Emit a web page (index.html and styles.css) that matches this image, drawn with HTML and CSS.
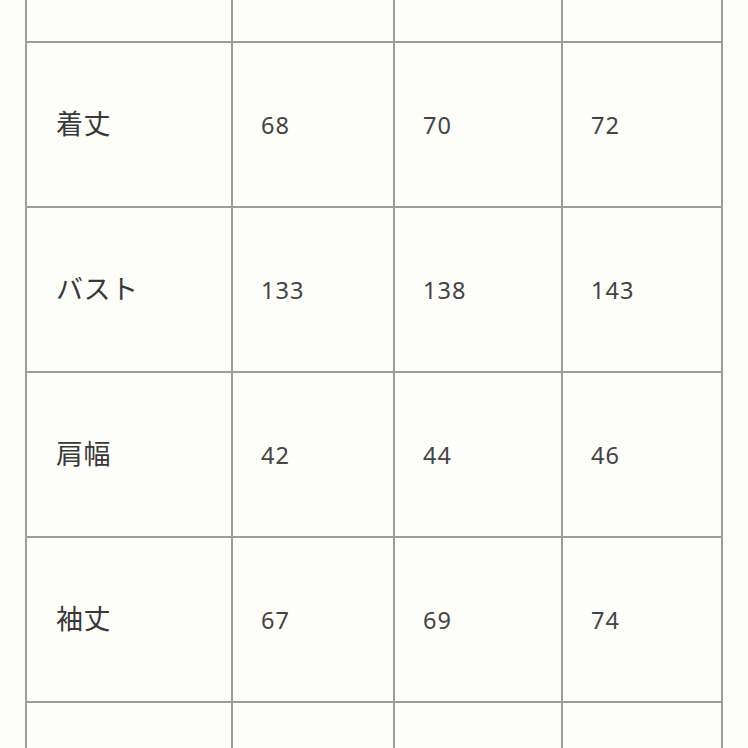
FILE: index.html
```html
<!DOCTYPE html>
<html lang="ja">
<head>
<meta charset="utf-8">
<link rel="stylesheet" href="styles.css">
</head>
<body>
<div class="frame">
<div class="sheet">
  <div class="cell"></div><div class="cell"></div><div class="cell"></div><div class="cell"></div>
  <div class="cell label">着丈</div><div class="cell num">68</div><div class="cell num">70</div><div class="cell num">72</div>
  <div class="cell label">バスト</div><div class="cell num">133</div><div class="cell num">138</div><div class="cell num">143</div>
  <div class="cell label">肩幅</div><div class="cell num">42</div><div class="cell num">44</div><div class="cell num">46</div>
  <div class="cell label">袖丈</div><div class="cell num">67</div><div class="cell num">69</div><div class="cell num">74</div>
  <div class="cell"></div><div class="cell"></div><div class="cell"></div><div class="cell"></div>
</div>
</div>
</body>
</html>
```
FILE: styles.css
```css
html, body {
  margin: 0;
  padding: 0;
  background: #fdfdf9;
}
body {
  font-family: "Noto Sans CJK JP", "Noto Sans", sans-serif;
  color: #383838;
}
.frame {
  height: 748px;
  overflow: hidden;
}
.sheet {
  margin: -124px 0 0 25px;
  width: max-content;
  display: grid;
  grid-template-columns: 204px 160px 166px 158px;
  grid-auto-rows: 163px;
  gap: 2px;
  padding: 2px;
  background: #9c9c9a;
}
.cell {
  background: #fdfdf9;
  display: flex;
  align-items: center;
}
.label {
  padding-left: 29px;
  padding-bottom: 5px;
  font-size: 27px;
  letter-spacing: 0.5px;
}
.num {
  padding-left: 28px;
  padding-bottom: 0;
  font-family: "Noto Sans", sans-serif;
  font-size: 23.5px;
  font-weight: 400;
  letter-spacing: 1px;
  color: #444444;
}
```
